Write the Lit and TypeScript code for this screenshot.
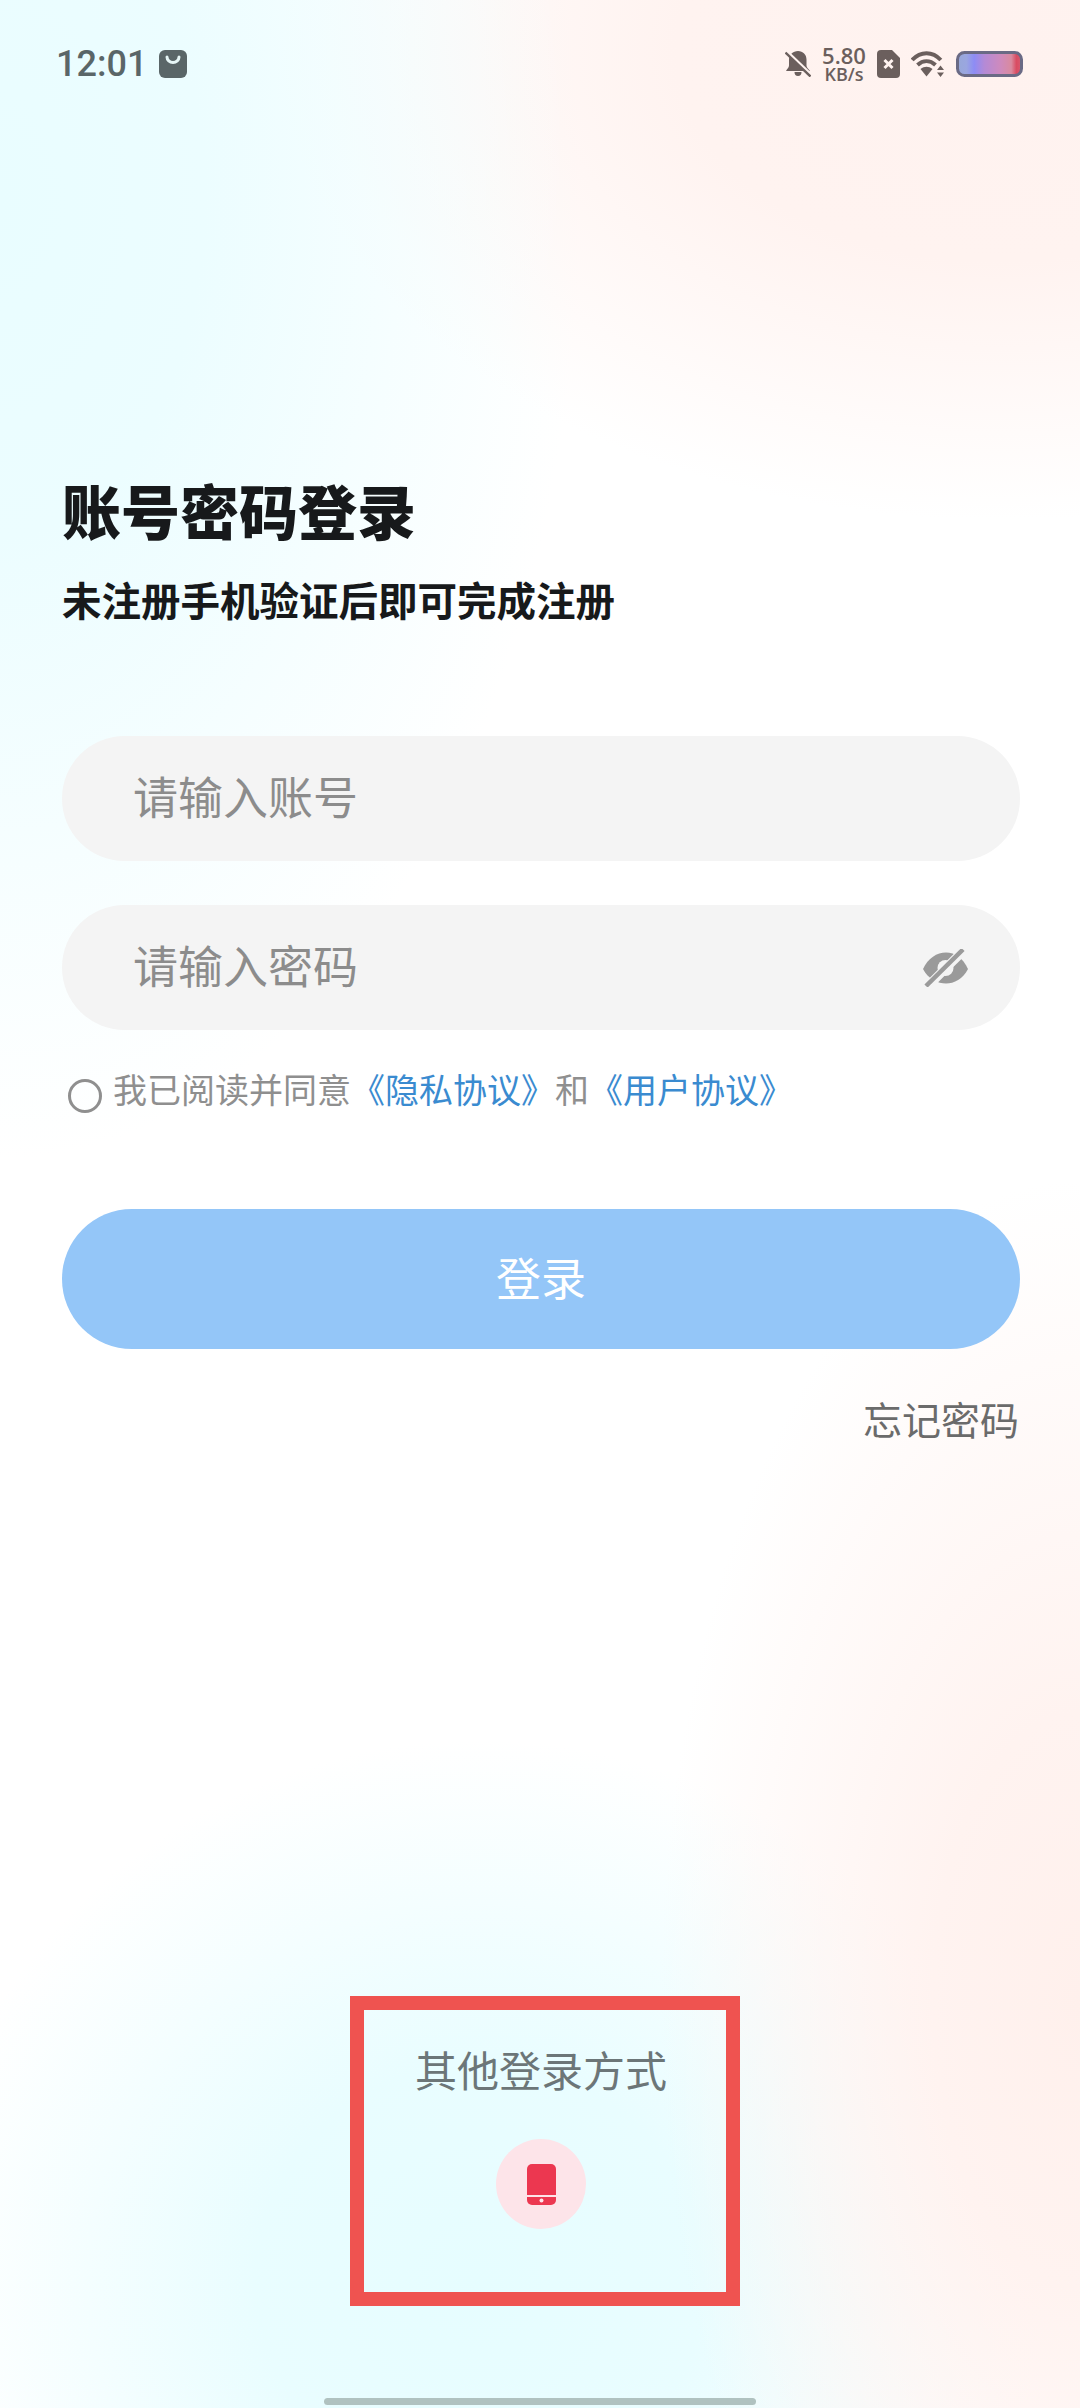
import { LitElement, html, css } from "lit";
import { customElement } from "lit/decorators.js";

@customElement("app-root")
export class AppRoot extends LitElement {
  static styles = css`
    :host {
      display: flex;
      flex-direction: column;
      width: 1080px;
      height: 2408px;
      overflow: hidden;
      font-family: "Noto Sans CJK SC", "Noto Sans", sans-serif;
      background-color: #ffffff;
      background-image:
        radial-gradient(ellipse 580px 960px at 0px 200px, #e9fdff 0%, #ecfdff 35%, rgba(233, 253, 255, 0) 100%),
        radial-gradient(ellipse 720px 470px at 1000px 50px, #fff2ef 0%, #fff3f0 45%, rgba(255, 242, 239, 0) 100%),
        radial-gradient(ellipse 420px 820px at 1080px 2000px, #fff0ec 0%, #fff3f0 35%, rgba(255, 243, 240, 0) 100%),
        radial-gradient(ellipse 560px 540px at 480px 2280px, #e6fdff 0%, #e9fdff 40%, rgba(232, 253, 255, 0) 100%);
    }
    .status {
      height: 127px;
      flex: none;
      display: flex;
      align-items: center;
      justify-content: space-between;
      padding: 0 57px 0 56px;
      box-sizing: border-box;
    }
    .status-left { display: flex; align-items: center; gap: 12px; }
    .time {
      font-family: Roboto, sans-serif;
      font-weight: 500;
      font-size: 36px;
      line-height: 40px;
      color: #5a6668;
    }
    .status-right { display: flex; align-items: center; color: #6b5f5d; }
    .bell { margin-right: 11px; }
    .speed {
      display: flex;
      flex-direction: column;
      align-items: center;
      width: 44px;
      font-family: "Open Sans", sans-serif;
      font-weight: 600;
      margin-right: 11px;
      padding-top: 1px;
    }
    .speed-num { font-size: 22px; line-height: 19px; }
    .speed-unit { font-size: 18px; line-height: 18px; }
    .sim { margin-right: 11px; }
    .wifi { margin-right: 11px; }
    .content {
      display: flex;
      flex-direction: column;
      padding: 0 60px 0 62px;
    }
    h1 {
      margin: 343px 0 0;
      font-size: 59px;
      line-height: 80px;
      font-weight: 900;
      color: #17191b;
    }
    .sub {
      margin: 19px 0 0;
      font-size: 39.500px;
      line-height: 60px;
      font-weight: 700;
      color: #17191b;
    }
    .field {
      height: 125px;
      border-radius: 63px;
      background: #f4f4f4;
      display: flex;
      align-items: center;
      justify-content: space-between;
      padding: 0 52px 0 71px;
      font-size: 45px;
      color: #8c8c8c;
    }
    .field > span { margin-top: -6px; }
    .first { margin-top: 107px; }
    .second { margin-top: 44px; }
    .agree {
      margin-top: 34px;
      display: flex;
      align-items: center;
      height: 50px;
      font-size: 34px;
      line-height: 50px;
      color: #8f8f8f;
      white-space: nowrap;
    }
    .radio {
      width: 34px;
      height: 34px;
      box-sizing: border-box;
      border: 3px solid #8f8f8f;
      border-radius: 50%;
      margin: 14px 0 0 6px;
      flex: none;
    }
    .agree-text { margin-left: 11px; }
    .link { color: #3a8bd0; }
    .login {
      margin-top: 95px;
      height: 140px;
      box-sizing: border-box;
      padding-bottom: 6px;
      border-radius: 70px;
      background: #94c6f8;
      color: #ffffff;
      font-size: 45px;
      display: flex;
      align-items: center;
      justify-content: center;
    }
    .forgot {
      margin: 44px 1px 0 0;
      align-self: flex-end;
      font-size: 39px;
      line-height: 50px;
      color: #6b6b6b;
    }
    .other {
      margin: auto 0 0 350px;
      width: 390px;
      height: 310px;
      box-sizing: border-box;
      flex: none;
      border: 14px solid #ef5350;
      padding: 29px 8px 0 0;
      display: flex;
      flex-direction: column;
      align-items: center;
    }
    .other-title {
      font-size: 42px;
      line-height: 60px;
      color: #6c7678;
    }
    .other-circle {
      margin-top: 40px;
      width: 90px;
      height: 90px;
      border-radius: 50%;
      background: #fde4e9;
      display: flex;
      align-items: center;
      justify-content: center;
    }
    .home {
      margin: 92px 0 3px 324px;
      width: 432px;
      height: 7px;
      flex: none;
      border-radius: 4px;
      background: #b0c2c0;
    }
    svg { display: block; flex: none; }
  `;

  render() {
    return html`
      <div class="status">
        <div class="status-left">
          <span class="time">12:01</span>
          <svg width="28" height="28" viewBox="0 0 28 28">
            <rect width="28" height="28" rx="6" fill="#5a6668"></rect>
            <path d="M8 7a6 5.500 0 0 0 12 0" fill="none" stroke="#e6f6f6" stroke-width="3" stroke-linecap="round"></path>
          </svg>
        </div>
        <div class="status-right">
          <svg class="bell" width="26" height="26" viewBox="0 0 26 26">
            <path d="M13 0c5 0 8.500 3.600 8.500 8.500v6c0 2 2 3.500 3.500 5.500H1c1-2 3-3.500 3-5.500v-6C4 3.600 8 0 13 0z" fill="currentColor"></path>
            <path d="M9.500 21h7a3.500 4 0 0 1-7 0z" fill="currentColor"></path>
            <path d="M3 1.500l23 22" stroke="#fff3f0" stroke-width="3"></path>
            <path d="M0.500 1.500l25 24" stroke="currentColor" stroke-width="2.400"></path>
          </svg>
          <div class="speed">
            <span class="speed-num">5.80</span>
            <span class="speed-unit">KB/s</span>
          </div>
          <svg class="sim" width="23" height="28" viewBox="0 0 23 28">
            <path d="M4 0h11l8 8v16a4 4 0 0 1-4 4H4a4 4 0 0 1-4-4V4a4 4 0 0 1 4-4z" fill="currentColor"></path>
            <path d="M7.500 10l8 8M15.500 10l-8 8" stroke="#fff3f0" stroke-width="3"></path>
          </svg>
          <svg class="wifi" width="34" height="27" viewBox="0 0 34 27">
            <path d="M1.200 10C9.500 1 21.500 1 29.800 10" fill="none" stroke="currentColor" stroke-width="4"></path>
            <path d="M6.500 15c5.500-5 12.500-5 18 0" fill="none" stroke="currentColor" stroke-width="4"></path>
            <path d="M9.500 19c4-3 8-3 12 0l-6 7.500z" fill="currentColor"></path>
            <path d="M29.500 15.500l3.500 4.500h-7zM29.500 27l-3.500-4.500h7z" fill="currentColor"></path>
          </svg>
          <svg width="67" height="26" viewBox="0 0 67 26">
            <defs>
              <linearGradient id="batt" x1="0" x2="1" y1="0" y2="0">
                <stop offset="0" stop-color="#98a8d8"></stop>
                <stop offset="0.14" stop-color="#9aa6e0"></stop>
                <stop offset="0.26" stop-color="#8d8cf5"></stop>
                <stop offset="0.42" stop-color="#b48ad6"></stop>
                <stop offset="0.68" stop-color="#cf8abc"></stop>
                <stop offset="0.84" stop-color="#d98a9f"></stop>
                <stop offset="0.92" stop-color="#d94c62"></stop>
                <stop offset="1" stop-color="#d85a70"></stop>
              </linearGradient>
            </defs>
            <rect x="1.500" y="1.500" width="64" height="23" rx="7" fill="url(#batt)" stroke="#6a6a85" stroke-width="3"></rect>
          </svg>
        </div>
      </div>

      <div class="content">
        <h1>账号密码登录</h1>
        <p class="sub">未注册手机验证后即可完成注册</p>
        <div class="field first"><span>请输入账号</span></div>
        <div class="field second">
          <span>请输入密码</span>
          <svg width="45" height="38" viewBox="0 0 45 38">
            <path d="M0 20C5 9 14 3.500 23 3.500S40 9 45 20c-5 10-14 14.500-22 14.500S5 30 0 20z" fill="#9a9a9a"></path>
            <circle cx="22.500" cy="19" r="8" fill="#f4f4f4"></circle>
            <path d="M4 38L41 1" stroke="#f4f4f4" stroke-width="9"></path>
            <path d="M3 37L40 0.500" stroke="#9a9a9a" stroke-width="4.500"></path>
          </svg>
        </div>
        <div class="agree">
          <span class="radio"></span>
          <span class="agree-text">我已阅读并同意<span class="link">《隐私协议》</span>和<span class="link">《用户协议》</span></span>
        </div>
        <div class="login">登录</div>
        <div class="forgot">忘记密码</div>
      </div>

      <div class="other">
        <div class="other-title">其他登录方式</div>
        <div class="other-circle">
          <svg width="29" height="41" viewBox="0 0 29 41">
            <path d="M5 0h19a5 5 0 0 1 5 5v26H0V5a5 5 0 0 1 5-5z" fill="#ec3750"></path>
            <path d="M0 33h29v3a5 5 0 0 1-5 5H5a5 5 0 0 1-5-5z" fill="#ec3750"></path>
            <circle cx="14.500" cy="36.500" r="2" fill="#fde4e9"></circle>
          </svg>
        </div>
      </div>
      <div class="home"></div>
    `;
  }
}
